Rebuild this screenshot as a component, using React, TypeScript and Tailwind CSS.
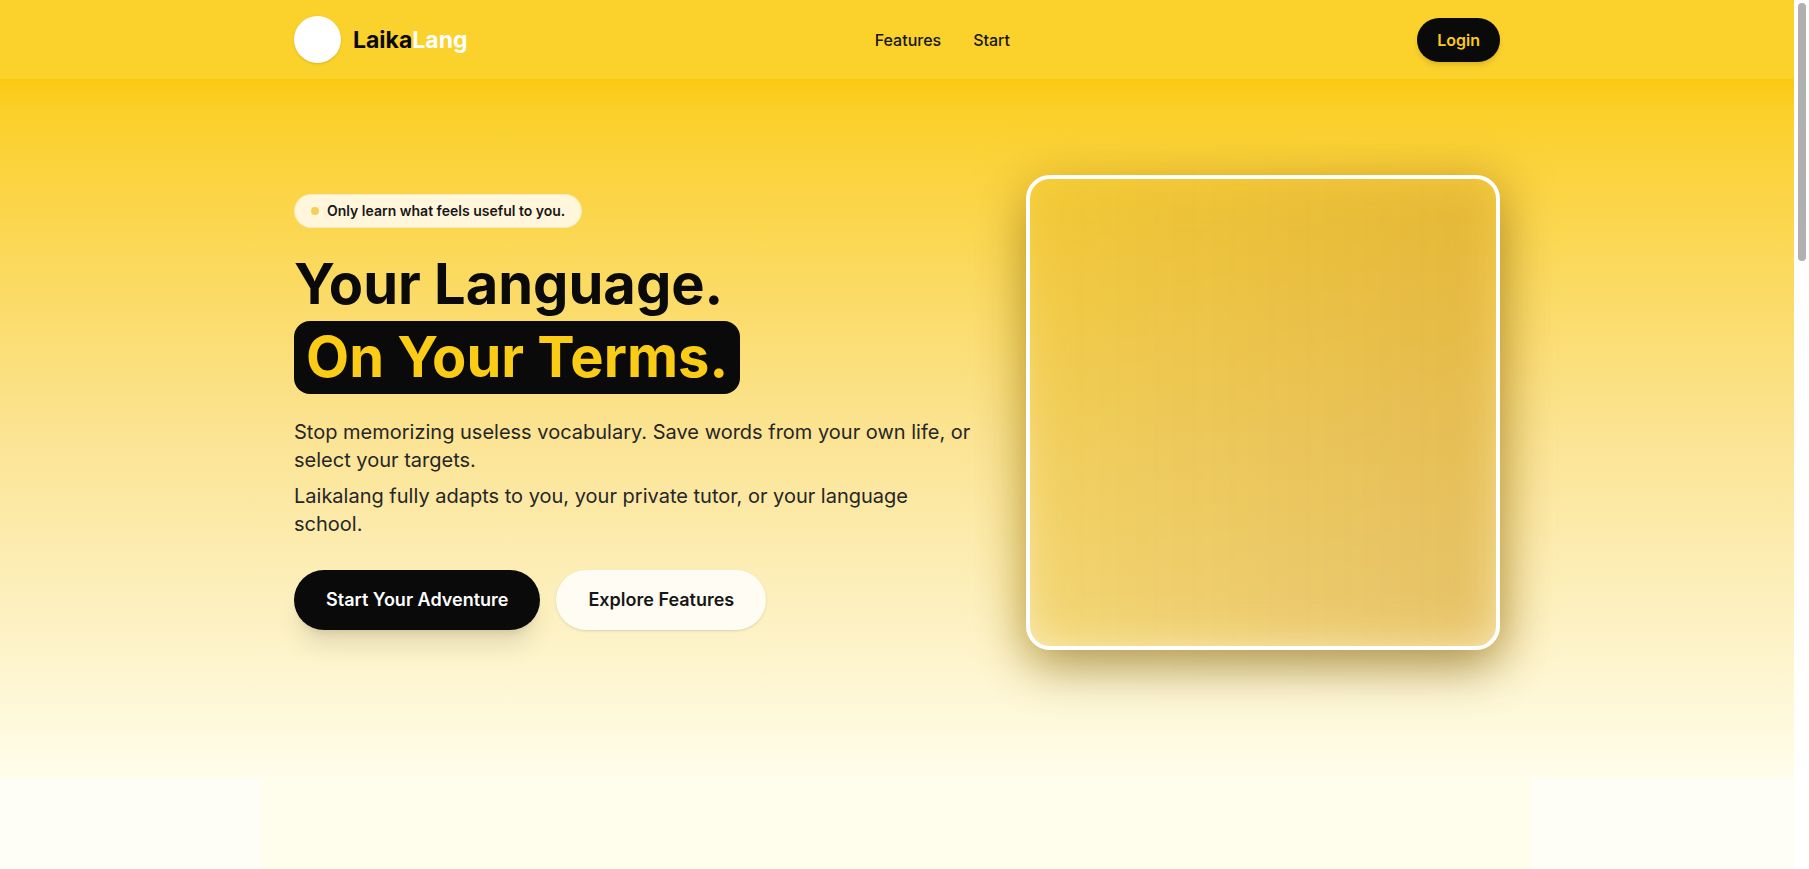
const navLinks = [
  { label: 'Features', href: '#features' },
  { label: 'Start', href: '#start' },
];

function Header() {
  return (
    <header className="bg-[#fbd12b]">
      <div className="mx-auto flex max-w-[1270px] items-center justify-between px-8 py-4">
        <a href="#" className="flex items-center gap-3">
          <span className="size-[47px] rounded-full bg-white shadow-sm" />
          <span className="text-[23px] leading-7 font-bold text-neutral-950">
            Laika<span className="text-white">Lang</span>
          </span>
        </a>

        <nav className="flex items-center gap-8">
          {navLinks.map((link) => (
            <a key={link.label} href={link.href} className="text-base font-medium text-neutral-900">
              {link.label}
            </a>
          ))}
        </nav>

        <button
          type="button"
          className="h-11 rounded-full bg-neutral-950 px-5 text-base font-semibold text-[#facc15] shadow-md"
        >
          Login
        </button>
      </div>
    </header>
  );
}

function Hero() {
  return (
    <div className="bg-[linear-gradient(to_bottom,#fac912_0%,#fbd02b_5%,#fbe391_50%,#fffdeb_100%)]">
      <section id="start" className="mx-auto grid max-w-[1270px] grid-cols-12 items-center gap-12 px-8 pt-24 pb-32">
        <div className="col-span-7 flex flex-col items-start">
          <p className="flex items-center gap-2 rounded-full border border-[#f9ebbd] bg-[#fff6db] px-4 py-1.5 text-sm font-semibold text-neutral-900">
            <span className="size-2 rounded-full bg-[#f5cf5b]" />
            Only learn what feels useful to you.
          </p>

          <h1 className="mt-5 text-[56px] leading-[73px] font-bold text-neutral-950">
            <span className="block">Your Language.</span>
            <span className="inline-block rounded-2xl bg-neutral-950 px-3 text-[#facc15]">On Your Terms.</span>
          </h1>

          <div className="mt-6 space-y-2 text-xl leading-7 text-neutral-800">
            <p>Stop memorizing useless vocabulary. Save words from your own life, or select your targets.</p>
            <p>Laikalang fully adapts to you, your private tutor, or your language school.</p>
          </div>

          <div className="mt-8 flex gap-4">
            <a
              href="#start"
              className="flex h-[60px] items-center rounded-full bg-neutral-950 px-8 text-lg font-semibold text-white shadow-xl"
            >
              Start Your Adventure
            </a>
            <a
              href="#features"
              className="flex h-[60px] items-center rounded-full bg-[#fffdf3] px-8 text-lg font-semibold text-neutral-900 shadow-sm"
            >
              Explore Features
            </a>
          </div>
        </div>

        <div className="relative col-span-5 aspect-square">
          {/* soft glow behind the frame */}
          <div className="absolute -inset-1 rounded-3xl bg-linear-to-r from-[#e8ba24]/50 to-[#d6a22c]/60 blur-xl" />
          <div className="relative size-full rounded-3xl border-4 border-white shadow-[0_20px_50px_-4px_rgba(80,60,0,0.42)]" />
        </div>
      </section>
    </div>
  );
}

export default function App() {
  return (
    <div className="flex min-h-screen bg-white font-['Inter',sans-serif]">
      <div className="flex min-w-0 flex-1 flex-col bg-[#fffef6]">
        <Header />
        <Hero />
        <section id="features" className="mx-auto w-full max-w-[1270px] flex-1 bg-[#fffdeb]" />
      </div>

      {/* Scroll track */}
      <div className="w-[15px] px-1 py-[3px]">
        <div className="h-[258px] w-2 rounded-full bg-[#b0b0b0]" />
      </div>
    </div>
  );
}
